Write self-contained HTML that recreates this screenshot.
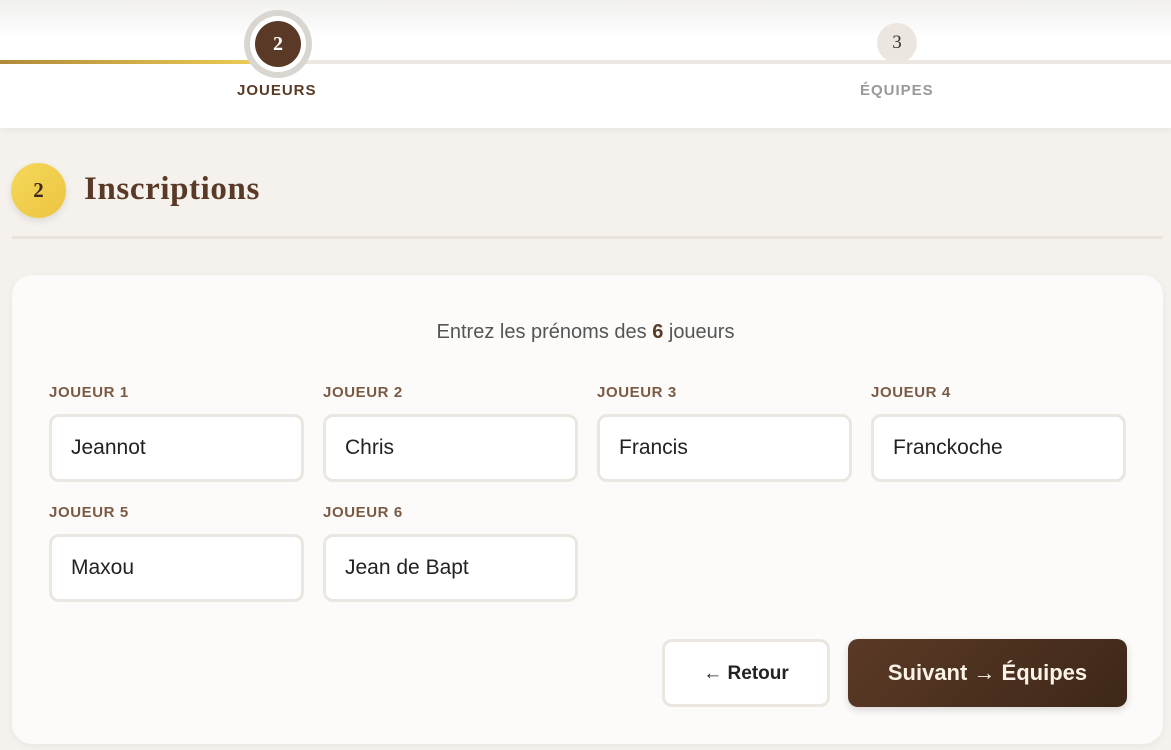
<!DOCTYPE html>
<html><head><meta charset="utf-8"><style>
*{box-sizing:border-box;margin:0;padding:0}
body{width:1171px;height:750px;overflow:hidden;background:#f5f2ed;font-family:"Liberation Sans",sans-serif;position:relative}
.hdr{position:absolute;left:0;top:0;width:1171px;height:128px;background:linear-gradient(#f1f0ef 0,#fff 40px,#fff);box-shadow:0 2px 8px rgba(0,0,0,.06)}
.track{position:absolute;left:0;top:60px;width:1171px;height:4px;background:#ece7e0}
.gold{position:absolute;left:0;top:60px;width:270px;height:4px;background:linear-gradient(90deg,#b08a3a,#f0cf55)}
.ring{position:absolute;left:244px;top:10px;width:68px;height:68px;border-radius:50%;background:#d9d5d0}
.s2{position:absolute;left:250px;top:16px;width:56px;height:56px;border-radius:50%;background:#fff}
.s2 i{position:absolute;left:5px;top:5px;width:46px;height:46px;border-radius:50%;background:#5a3a26;color:#fff;font:bold 20px/46px "Liberation Serif",serif;text-align:center;font-style:normal}
.s3{position:absolute;left:877px;top:23px;width:40px;height:40px;border-radius:50%;background:#ebe6df;color:#333;font:19px/40px "Liberation Serif",serif;text-align:center}
.lbl{position:absolute;top:82px;font-weight:bold;font-size:15px;letter-spacing:1px}
.yc{position:absolute;left:11px;top:163px;width:55px;height:55px;border-radius:50%;background:linear-gradient(135deg,#f5d85a,#ecc440);box-shadow:0 3px 8px rgba(0,0,0,.1);color:#3a2a1a;font:bold 21px/55px "Liberation Serif",serif;text-align:center}
h1{position:absolute;left:84px;top:171px;font:bold 33px "Liberation Serif",serif;letter-spacing:.6px;color:#5a3a26}
.hr{position:absolute;left:12px;top:236px;width:1151px;height:3px;background:#ebe4dc}
.card{position:absolute;left:12px;top:275px;width:1151px;height:469px;background:#fcfbf9;border-radius:20px;box-shadow:0 2px 8px rgba(0,0,0,.05)}
.sub{position:absolute;left:0;width:1171px;top:321px;text-align:center;font-size:20px;color:#555}
.sub b{color:#5a3a26}
.f{position:absolute;width:255px}
.f span{display:block;font-weight:bold;font-size:15px;letter-spacing:.6px;color:#7a5a45;height:30px}
.f div{height:68px;border:3px solid #ebe6df;border-radius:10px;background:#fff;font-size:21px;line-height:62px;padding-left:19px;color:#222}
.btn{position:absolute;top:639px;height:68px;border-radius:10px;font-weight:bold;text-align:center;line-height:66px}
</style></head><body>
<div class="hdr">
<div class="track"></div><div class="gold"></div>
<div class="ring"></div><div class="s2"><i>2</i></div>
<div class="s3">3</div>
<div class="lbl" style="left:237px;color:#5a3a26">JOUEURS</div>
<div class="lbl" style="left:860px;color:#999">ÉQUIPES</div>
</div>
<div class="yc">2</div>
<h1>Inscriptions</h1>
<div class="hr"></div>
<div class="card"></div>
<div class="sub">Entrez les prénoms des <b>6</b> joueurs</div>
<div class="f" style="left:49px;top:384px"><span>JOUEUR 1</span><div>Jeannot</div></div>
<div class="f" style="left:323px;top:384px"><span>JOUEUR 2</span><div>Chris</div></div>
<div class="f" style="left:597px;top:384px"><span>JOUEUR 3</span><div>Francis</div></div>
<div class="f" style="left:871px;top:384px"><span>JOUEUR 4</span><div>Franckoche</div></div>
<div class="f" style="left:49px;top:504px"><span>JOUEUR 5</span><div>Maxou</div></div>
<div class="f" style="left:323px;top:504px"><span>JOUEUR 6</span><div>Jean de Bapt</div></div>
<div class="btn" style="left:662px;width:168px;border:3px solid #ebe6df;background:#fff;color:#222;font-size:19px;line-height:64px">← Retour</div>
<div class="btn" style="left:848px;width:279px;background:linear-gradient(135deg,#5a3a26,#3e2718);color:#fbf3e8;font-size:22px;line-height:68px;box-shadow:0 3px 8px rgba(0,0,0,.15)">Suivant → Équipes</div>
</body></html>
